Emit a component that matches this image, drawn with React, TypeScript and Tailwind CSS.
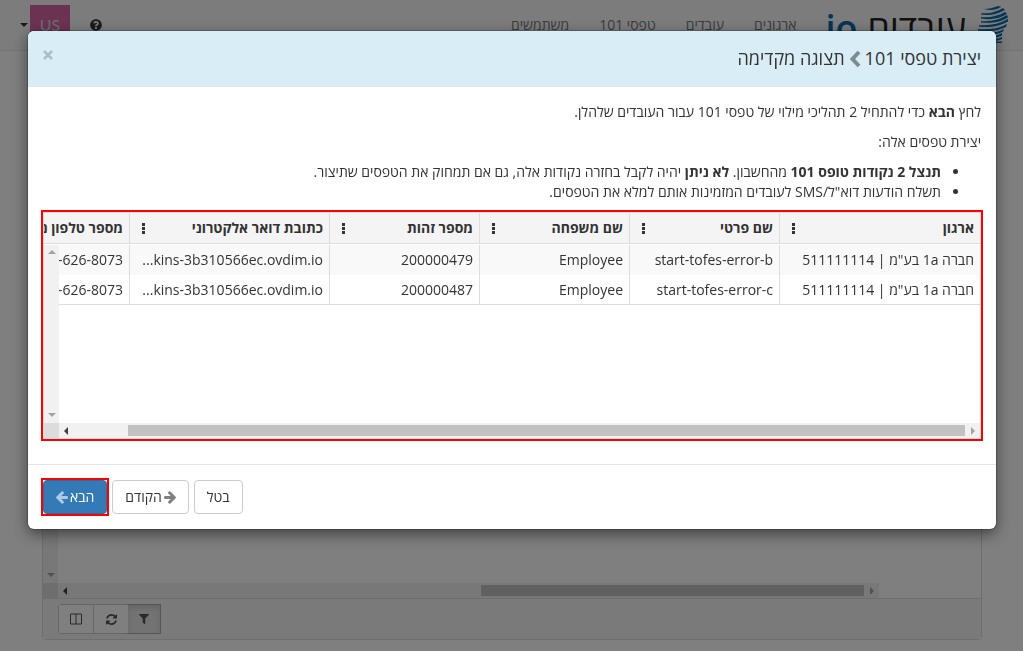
import type { ReactNode } from "react";
import { FaFilter, FaQuestionCircle } from "react-icons/fa";

const NAV_LINKS = ["ארגונים", "עובדים", "טפסי 101", "משתמשים"];

const COLUMNS = [
    { title: "ארגון", width: "w-[201px]" },
    { title: "שם פרטי", width: "w-[150px]" },
    { title: "שם משפחה", width: "w-[150px]" },
    { title: "מספר זהות", width: "w-[150px]" },
    { title: "כתובת דואר אלקטרוני", width: "w-[200px]" },
    { title: "מספר טלפון נייד", width: "w-[200px]" },
];

const ROWS = [
    ["חברה 1a בע\"מ | 511111114", "start-tofes-error-b", "Employee", "200000479", "kins-3b310566ec.ovdim.io...", "+972-54-626-8073"],
    ["חברה 1a בע\"מ | 511111114", "start-tofes-error-c", "Employee", "200000487", "kins-3b310566ec.ovdim.io...", "+972-54-626-8073"],
];

function ScrollArrow({ dir, dim }: { dir: "up" | "down" | "left" | "right"; dim?: boolean }) {
    const points = {
        up: "4,9 12,9 8,5",
        down: "4,6 12,6 8,10",
        left: "9,4 9,12 5,8",
        right: "6,4 6,12 10,8",
    };
    return (
        <svg viewBox="0 0 15 16" className={`h-4 w-[15px] shrink-0 ${dim ? "fill-[#a3a3a3]" : "fill-[#404040]"}`}>
            <polygon points={points[dir]} />
        </svg>
    );
}

function ButtonArrow({ className }: { className: string }) {
    return (
        <svg viewBox="64 150 1472 1620" className={`h-[13px] w-3 fill-current ${className}`}>
            <path d="M1536 896v128q0 53-32.500 90.500T1419 1152H715l293 294q38 36 38 90t-38 90l-75 76q-37 37-90 37-52 0-91-37L101 1050q-37-37-37-90 0-52 37-91l651-650q38-38 91-38 52 0 90 38l75 74q38 38 38 91t-38 91L715 768h704q52 0 84.500 37.500T1536 896z" />
        </svg>
    );
}

function VerticalScrollbar({ className }: { className: string }) {
    return (
        <div className={`w-[15px] flex-col items-center justify-between bg-[#f1f1f1] ${className}`}>
            <ScrollArrow dir="up" dim />
            <ScrollArrow dir="down" dim />
        </div>
    );
}

function Logo() {
    return (
        <a href="#" className="flex h-[50px] items-start gap-[10px] pt-[5px]" aria-label="עובדים io">
            <svg viewBox="0 0 32 38" className="h-[38px] w-8 fill-[#0a6aa8]">
                <path d="M8 4c5 0 9-1 14-3 2 0 3 1 3 1-5 3-11 4-17 2z" />
                <path d="M6 8c8 1 14-1 21-5l2 2C22 9 13 11 5 9.500z" />
                <path d="M5 12c9 1 17-1 24-5l2 2c-8 5-17 6-26 4.500z" />
                <path d="M5 16c9 1 18-1 26-6l1 2.500c-8 5-18 6-27 5z" />
                <path d="M3 20c10 1 20-1 29-6v2.500c-9 5-19 6.500-29 5z" />
                <path d="M2 24c10 1 20 0 29-5l-1 3c-8 4-18 5-28 3.500z" />
                <path d="M3 28c9 1 18 0 25-4l-1 2.500c-7 4-16 4-23 3z" />
                <path d="M12 31c5 0 9 0 14-3v2.500c-4 2-9 2.500-13 2z" />
                <path d="M14 34c4 0 8 0 12-2v2c-4 2-8 2-12 1.500z" />
                <path d="M14 36.500h12v1.500H14z" />
            </svg>
            <span className="text-4xl/[46px] font-medium text-[#222]">עובדים</span>
            <span className="text-4xl/[46px] font-semibold text-[#0a6aa8]">io</span>
        </a>
    );
}

function PageHeader() {
    return (
        <header className="flex h-[51px] items-start overflow-hidden border-b border-[#e7e7e7] bg-[#f8f8f8] pr-[15px] pl-5">
            <Logo />
            <nav className="flex grow pr-[14px]">
                {NAV_LINKS.map((link) => (
                    <a key={link} href="#" className="px-[15px] py-[15px] text-sm/5 text-[#777]">
                        {link}
                    </a>
                ))}
            </nav>
            <button aria-label="עזרה" className="mt-[19px] ml-5 text-[#333]">
                <FaQuestionCircle size={12} />
            </button>
            <button className="mt-[5px] flex items-center gap-[2px]">
                <span className="flex size-10 items-center justify-center bg-[#d965a5] font-[Lato] text-base text-[#ddd]">US</span>
                <span className="border-x-4 border-t-4 border-x-transparent border-t-[#333]" />
            </button>
        </header>
    );
}

function BackgroundGrid() {
    return (
        <main className="mr-[41px] ml-[42px] flex grow flex-col rounded-b border border-[#ddd] bg-white">
            <div className="flex grow justify-end">
                <VerticalScrollbar className="flex" />
            </div>
            <div className="flex h-[15px] justify-end">
                <div className="w-[102px]" />
                <div className="flex grow items-center bg-[#f1f1f1]">
                    <ScrollArrow dir="right" dim />
                    <div className="h-[11px] w-[383px] bg-[#c1c1c1]" />
                    <div className="grow" />
                    <ScrollArrow dir="left" />
                </div>
                <div className="w-[15px] bg-[#dcdcdc]" />
            </div>
            <footer className="flex justify-end border-t border-[#ddd] bg-[#f5f5f5] px-[15px] py-[5px]">
                <div className="flex rounded-[3px] border border-[#ccc] text-[#555]">
                    <button aria-label="סינון" className="flex h-7 w-8 items-center justify-center bg-[#e6e6e6] shadow-[inset_0_3px_5px_rgba(0,0,0,0.125)] outline outline-[#adadad]">
                        <FaFilter size={10} />
                    </button>
                    <button aria-label="רענון" className="flex h-7 w-[34px] items-center justify-center bg-white">
                        <svg viewBox="0 0 1536 1536" className="size-[11px] fill-current">
                            <path d="M1511 928q0 5-1 7-64 268-268 434.500T764 1536q-146 0-282.500-55T238 1324l-129 129q-19 19-45 19t-45-19-19-45V960q0-26 19-45t45-19h448q26 0 45 19t19 45-19 45l-137 137q71 66 161 102t187 36q134 0 250-65t186-179q11-17 53-117 8-23 30-23h192q13 0 22.500 9.500t9.500 22.500zm25-800v448q0 26-19 45t-45 19h-448q-26 0-45-19t-19-45 19-45l138-138Q969 256 768 256q-134 0-250 65T332 500q-11 17-53 117-8 23-30 23H50q-13 0-22.500-9.500T18 608v-7q65-268 270-434.500T768 0q146 0 284 55.500T1297 212l130-129q19-19 45-19t45 19 19 45z" />
                        </svg>
                    </button>
                    <button aria-label="עמודות" className="flex h-7 w-[35px] items-center justify-center border-r border-[#ccc] bg-white">
                        <svg viewBox="0 0 12 12" className="size-3 fill-none stroke-current">
                            <path d="M.5 1h11v10H.5zM6 1v10" />
                        </svg>
                    </button>
                </div>
            </footer>
        </main>
    );
}

function EmployeesGrid() {
    return (
        <div className="relative mt-[10px] flex h-[227px] flex-col overflow-hidden border border-[#ddd] outline-2 outline-[#f00]">
            <div className="grow overflow-hidden">
                <table className="w-[1051px] table-fixed border-separate border-spacing-0 text-sm/5">
                    <thead>
                        <tr className="bg-[#f4f4f4]">
                            {COLUMNS.map((column) => (
                                <th key={column.title} scope="col" className={`h-[31px] border-b border-l border-[#ddd] p-0 pr-[6px] ${column.width}`}>
                                    <div className="flex items-center justify-between pl-3">
                                        <span className="whitespace-nowrap">{column.title}</span>
                                        <button aria-label="תפריט עמודה" className="flex flex-col gap-px">
                                            <span className="size-[3px] bg-[#333]" />
                                            <span className="size-[3px] bg-[#333]" />
                                            <span className="size-[3px] bg-[#333]" />
                                        </button>
                                    </div>
                                </th>
                            ))}
                        </tr>
                    </thead>
                    <tbody className="before:block before:h-px">
                        {ROWS.map((row) => (
                            <tr key={row[1]} className="odd:bg-[#f9f9f9] last:*:border-b">
                                {row.map((cell, i) => (
                                    <td key={i} className="h-[30px] truncate border-l border-[#ddd] p-0 pr-[6px]">
                                        {i === 5 ? <bdi>{cell}</bdi> : cell}
                                    </td>
                                ))}
                            </tr>
                        ))}
                    </tbody>
                </table>
            </div>
            <VerticalScrollbar className="absolute top-8 bottom-[15px] left-0 flex" />
            <div className="flex h-[15px] items-center bg-[#f1f1f1]">
                <ScrollArrow dir="right" dim />
                <div className="h-[11px] w-[837px] bg-[#c1c1c1]" />
                <div className="grow" />
                <ScrollArrow dir="left" />
                <div className="h-full w-[15px] bg-[#dcdcdc]" />
            </div>
        </div>
    );
}

function FooterButton({ children }: { children: ReactNode }) {
    return (
        <button className="flex h-[34px] items-center gap-[2px] rounded border border-[#ccc] bg-white px-3 text-sm/5">
            {children}
        </button>
    );
}

function PreviewDialog() {
    return (
        <div role="dialog" aria-labelledby="dialog-title" className="overflow-hidden rounded-md bg-white shadow-[0_0_0_1px_rgba(0,0,0,0.2),0_5px_15px_rgba(0,0,0,0.5)]">
            <div className="flex items-start justify-between border-b border-[#e5e5e5] bg-[#d9edf7] p-[15px]">
                <h4 id="dialog-title" className="flex items-center gap-1 text-lg/[25px]">
                    <span>יצירת טפסי 101</span>
                    <svg viewBox="0 0 12 18" className="h-[18px] w-3 fill-none stroke-[#808b90] stroke-4">
                        <path d="M10 2L3.500 9l6.500 7" />
                    </svg>
                    <span>תצוגה מקדימה</span>
                </h4>
                <button aria-label="סגור" className="mt-1">
                    <svg viewBox="0 0 10 10" className="size-[10px] fill-none stroke-[#adbec6] stroke-[2.5]">
                        <path d="M1 1l8 8M9 1l-8 8" />
                    </svg>
                </button>
            </div>
            <div className="p-[15px] pb-[25px] text-sm/5">
                <p className="mb-[10px]">
                    לחץ <b>הבא</b> כדי להתחיל 2 תהליכי מילוי של טפסי 101 עבור העובדים שלהלן.
                </p>
                <p className="mb-[10px]">יצירת טפסים אלה:</p>
                <ul className="list-disc pr-10">
                    <li>
                        <b>תנצל 2 נקודות טופס 101</b> מהחשבון. <b>לא ניתן</b> יהיה לקבל בחזרה נקודות אלה, גם אם תמחוק את הטפסים שתיצור.
                    </li>
                    <li>תשלח הודעות דוא"ל/SMS לעובדים המזמינות אותם למלא את הטפסים.</li>
                </ul>
                <EmployeesGrid />
            </div>
            <div className="flex justify-end gap-[5px] border-t border-[#e5e5e5] p-[15px]">
                <FooterButton>בטל</FooterButton>
                <FooterButton>
                    <ButtonArrow className="-scale-x-100 text-[#808080]" />
                    הקודם
                </FooterButton>
                <div className="outline-2 outline-[#f00]">
                    <button className="flex h-[34px] items-center gap-[2px] rounded border border-[#2e6da4] bg-[#337ab7] px-3 text-sm/5 text-white">
                        הבא
                        <ButtonArrow className="opacity-60" />
                    </button>
                </div>
            </div>
        </div>
    );
}

export default function App() {
    return (
        <div dir="rtl" className="font-['Open_Sans','Noto_Sans',sans-serif] text-[#333]">
            <div className="flex h-screen flex-col bg-white pb-[11px]">
                <PageHeader />
                <BackgroundGrid />
            </div>
            <div className="fixed inset-0 bg-black/50 pt-[31px] pr-[27px] pl-7">
                <PreviewDialog />
            </div>
        </div>
    );
}
